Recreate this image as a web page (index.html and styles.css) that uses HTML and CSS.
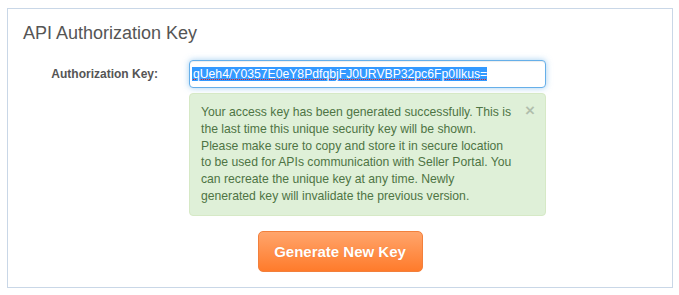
FILE: index.html
```html
<!DOCTYPE html>
<html>
<head>
<meta charset="utf-8">
<title>API Authorization Key</title>
<link rel="stylesheet" href="styles.css">
</head>
<body>
<div class="panel">
  <h3 class="panel-title">API Authorization Key</h3>
  <div class="form-row">
    <label class="form-label">Authorization Key:</label>
    <div class="form-field">
      <div class="key-input"><span class="key-selected">qUeh4/Y0357E0eY8PdfqbjFJ0URVBP32pc6Fp0Ilkus=</span></div>
      <div class="alert">
        <span class="alert-close">×</span>
        Your access key has been generated successfully. This is<br>
        the last time this unique security key will be shown.<br>
        Please make sure to copy and store it in secure location<br>
        to be used for APIs communication with Seller Portal. You<br>
        can recreate the unique key at any time. Newly<br>
        generated key will invalidate the previous version.
      </div>
    </div>
  </div>
  <div class="actions">
    <button class="btn-generate" type="button">Generate New Key</button>
  </div>
</div>
</body>
</html>
```

FILE: styles.css
```css
html, body {
  margin: 0;
  padding: 0;
  background: #ffffff;
  font-family: "Liberation Sans", Arial, sans-serif;
}

.panel {
  box-sizing: border-box;
  width: 666px;
  margin: 8px 0 0 7px;
  padding: 14px 15px 15px 15px;
  border: 1px solid #c9d7e7;
  background: #ffffff;
}

.panel-title {
  margin: 0;
  font-size: 18px;
  line-height: 20px;
  font-weight: normal;
  color: #555555;
}

.form-row {
  display: grid;
  grid-template-columns: 135px 357px;
  column-gap: 31px;
  margin-top: 17px;
}

.form-label {
  height: 28px;
  display: flex;
  align-items: center;
  justify-content: flex-end;
  font-size: 12px;
  font-weight: bold;
  color: #555555;
}

.form-field {
  display: flex;
  flex-direction: column;
}

.key-input {
  box-sizing: border-box;
  height: 28px;
  padding: 0 2px;
  display: flex;
  align-items: center;
  border: 1px solid #66afe9;
  border-radius: 4px;
  box-shadow: inset 0 1px 1px rgba(0, 0, 0, 0.075), 0 0 6px rgba(102, 175, 233, 0.6);
  background: #ffffff;
  font-size: 12.2px;
  white-space: nowrap;
  overflow: hidden;
}

.key-selected {
  background: #3399ff;
  color: #ffffff;
  line-height: 14px;
  padding-left: 1px;
  text-decoration: underline dotted #e0201c;
  text-decoration-thickness: 1px;
  text-underline-offset: 1px;
}

.alert {
  position: relative;
  box-sizing: border-box;
  margin-top: 5px;
  padding: 10px 10px 10px 11px;
  border: 1px solid #d6e9c6;
  border-radius: 4px;
  background: #dff0d8;
  color: #4e7444;
  font-size: 12.2px;
  line-height: 16.8px;
}

.alert-close {
  position: absolute;
  top: 8px;
  right: 10px;
  font-size: 17px;
  line-height: 17px;
  font-weight: bold;
  color: #000000;
  opacity: 0.2;
  text-shadow: 0 1px 0 #ffffff;
}

.actions {
  display: flex;
  justify-content: center;
  margin-top: 15px;
}

.btn-generate {
  box-sizing: border-box;
  width: 165px;
  height: 41px;
  padding: 0;
  border: 1px solid #f2803c;
  border-radius: 5px;
  background: linear-gradient(to bottom, #ffa56c 0%, #ff7b2b 100%);
  color: #ffffff;
  font-family: "Liberation Sans", Arial, sans-serif;
  font-size: 15px;
  font-weight: bold;
  text-shadow: 0 0 1px rgba(200, 80, 20, 0.3);
}
```
